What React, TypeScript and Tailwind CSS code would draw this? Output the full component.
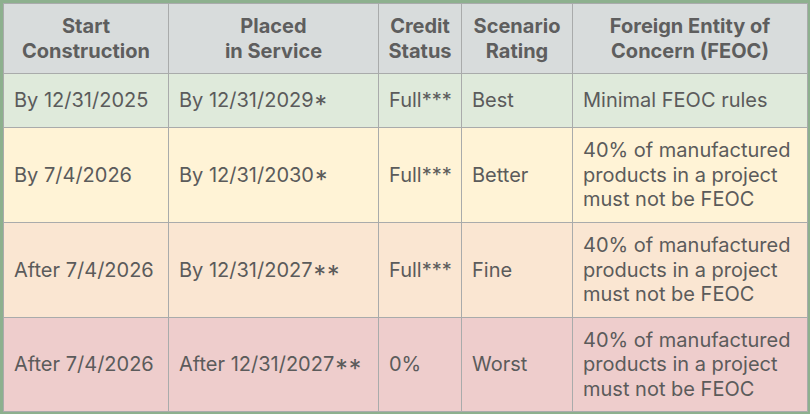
const Star = ({ n }: { n: number }) => (
  <span className="relative top-[7px] ml-[1px] text-[25px] leading-[0] tracking-[1px]">{'*'.repeat(n)}</span>
);

const rows = [
  { bg: 'bg-[#dfeadb]', h: 'h-[54px]', start: 'By 12/31/2025', placed: 'By 12/31/2029', stars: 1, credit: 'Full***', rating: 'Best', feoc: 'Minimal FEOC rules' },
  { bg: 'bg-[#fff3d6]', h: 'h-[95px]', start: 'By 7/4/2026', placed: 'By 12/31/2030', stars: 1, credit: 'Full***', rating: 'Better', feoc: '40% of manufactured products in a project must not be FEOC' },
  { bg: 'bg-[#fae6d2]', h: 'h-[95px]', start: 'After 7/4/2026', placed: 'By 12/31/2027', stars: 2, credit: 'Full***', rating: 'Fine', feoc: '40% of manufactured products in a project must not be FEOC' },
  { bg: 'bg-[#eecdcc]', h: 'h-[94px]', start: 'After 7/4/2026', placed: 'After 12/31/2027', stars: 2, credit: '0%', rating: 'Worst', feoc: '40% of manufactured products in a project must not be FEOC' },
];

export default function App() {
  const td = 'border border-[#a9abab] px-[10px] align-middle leading-[24.5px]';
  const th = 'border border-[#a9abab] px-1 text-center align-middle font-bold leading-[25px]';
  return (
    <div className="h-[414px] w-[810px] bg-[#8db08e] p-[3px] font-['Inter',sans-serif] text-[20px] text-[#5b5b5b]">
      <table className="w-[804px] table-fixed border-collapse border border-[#a9abab]">
        <colgroup>
          <col className="w-[165px]" />
          <col className="w-[210px]" />
          <col className="w-[83px]" />
          <col className="w-[111px]" />
          <col className="w-[235px]" />
        </colgroup>
        <thead>
          <tr className="h-[70px] bg-[#d8dcdc] text-[#5e5e5e]">
            <th className={th}>Start<br />Construction</th>
            <th className={th}>Placed<br />in Service</th>
            <th className={th}>Credit<br />Status</th>
            <th className={th}>Scenario<br />Rating</th>
            <th className={th}>Foreign Entity of<br />Concern (FEOC)</th>
          </tr>
        </thead>
        <tbody>
          {rows.map((r, i) => (
            <tr key={i} className={`${r.bg} ${r.h}`}>
              <td className={td}>{r.start}</td>
              <td className={`${td} whitespace-nowrap`}>{r.placed}<Star n={r.stars} /></td>
              <td className={td}>{r.credit}</td>
              <td className={td}>{r.rating}</td>
              <td className={td}>{r.feoc}</td>
            </tr>
          ))}
        </tbody>
      </table>
    </div>
  );
}
